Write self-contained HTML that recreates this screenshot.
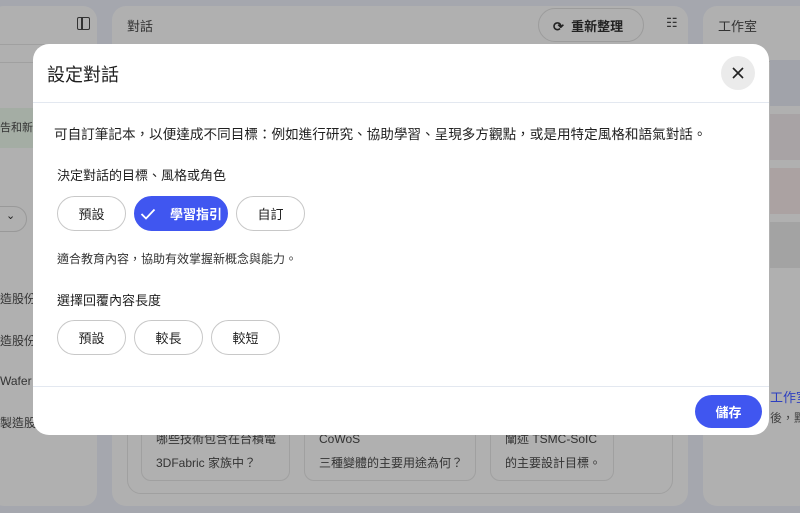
<!DOCTYPE html>
<html><head><meta charset="utf-8"><style>
*{box-sizing:border-box;margin:0;padding:0}
body{width:800px;height:513px;overflow:hidden;background:#a5a7ae;font-family:"Liberation Sans","Noto Sans CJK TC",sans-serif;position:relative;color:#1f1f1f}
.p{position:absolute;background:#b0b0b0;border-radius:14px}
.t{position:absolute;white-space:nowrap}
.dlg{position:absolute;left:33px;top:44px;width:736px;height:391px;background:#fff;border-radius:16px}
.chip{position:absolute;height:35px;border:1px solid #c8c8c8;border-radius:18px;font-size:13px;display:flex;align-items:center;justify-content:center;background:#fff;color:#1f1f1f}
.card{position:absolute;border:1px solid #a0a0a0;border-radius:10px;font-size:12px;color:#333;line-height:24px;padding-left:14px}
</style></head><body>
<div class="p" style="left:-10px;top:6px;width:107px;height:500px"></div>
<div class="p" style="left:112px;top:6px;width:576px;height:500px"></div>
<div class="p" style="left:703px;top:6px;width:110px;height:500px"></div>
<div style="position:absolute;left:0;top:44px;width:97px;height:1px;background:#a0a0a0"></div>
<div style="position:absolute;left:0;top:62px;width:97px;height:1px;background:#a0a0a0"></div>
<div style="position:absolute;left:0;top:108px;width:97px;height:40px;background:#a4ada4"></div>
<div class="t" style="left:0;top:119px;font-size:11px;color:#333">告和新</div>
<div style="position:absolute;left:-20px;top:206px;width:47px;height:26px;border:1px solid #999;border-radius:14px"></div>
<div class="t" style="left:6px;top:209px;font-size:11px">⌄</div>
<div class="t" style="left:0;top:290px;font-size:12px;color:#333">造股份有</div>
<div class="t" style="left:0;top:332px;font-size:12px;color:#333">造股份有</div>
<div class="t" style="left:0;top:374px;font-size:12px;color:#333">Wafer L</div>
<div class="t" style="left:0;top:414px;font-size:12px;color:#333">製造股</div>
<div style="position:absolute;left:77px;top:17px;width:13px;height:13px;border:1.5px solid #333;border-radius:2px"></div>
<div style="position:absolute;left:81px;top:17px;width:1.5px;height:13px;background:#333"></div>
<div class="t" style="left:127px;top:16px;font-size:13px;color:#333">對話</div>
<div style="position:absolute;left:538px;top:8px;width:106px;height:34px;border:1px solid #9c9c9c;border-radius:17px"></div>
<div class="t" style="left:553px;top:16px;font-size:13px;color:#222;font-weight:bold">⟳&nbsp;&nbsp;重新整理</div>
<div class="t" style="left:666px;top:15px;font-size:13px;color:#333">☷</div>
<div class="t" style="left:718px;top:16px;font-size:13px;color:#333">工作室</div>
<div style="position:absolute;left:703px;top:61px;width:97px;height:1px;background:#a0a0a0"></div>
<div style="position:absolute;left:770px;top:60px;width:30px;height:46px;background:#a1a3aa"></div>
<div style="position:absolute;left:770px;top:114px;width:30px;height:46px;background:#a8a3a5"></div>
<div style="position:absolute;left:770px;top:168px;width:30px;height:46px;background:#aba2a2"></div>
<div style="position:absolute;left:770px;top:222px;width:30px;height:46px;background:#a3a3a3"></div>
<div class="t" style="left:770px;top:387px;font-size:13px;color:#2d3fc0">工作室</div>
<div class="t" style="left:770px;top:409px;font-size:12px;color:#444">後，點</div>
<div style="position:absolute;left:127px;top:400px;width:546px;height:94px;border:1px solid #a0a0a0;border-radius:14px"></div>
<div class="card" style="left:141px;top:410px;width:149px;height:71px;padding-top:16px">哪些技術包含在台積電<br>3DFabric 家族中？</div>
<div class="card" style="left:304px;top:410px;width:172px;height:71px;padding-top:16px">CoWoS<br>三種變體的主要用途為何？</div>
<div class="card" style="left:490px;top:410px;width:124px;height:71px;padding-top:16px">闡述 TSMC-SoIC<br>的主要設計目標。</div>
<div class="dlg">
<div class="t" style="left:14px;top:17px;font-size:18px;color:#1f1f1f">設定對話</div>
<div style="position:absolute;left:688px;top:12px;width:34px;height:34px;border-radius:50%;background:#ebebeb"></div>
<svg style="position:absolute;left:698px;top:22px" width="14" height="14" viewBox="0 0 14 14"><path d="M2 2L12 12M12 2L2 12" stroke="#222" stroke-width="1.6"/></svg>
<div style="position:absolute;left:0;top:58px;width:736px;height:1px;background:#e3e8f0"></div>
<div class="t" style="left:21px;top:79px;font-size:13.6px;color:#1f1f1f">可自訂筆記本，以便達成不同目標：例如進行研究、協助學習、呈現多方觀點，或是用特定風格和語氣對話。</div>
<div class="t" style="left:24px;top:121px;font-size:13px">決定對話的目標、風格或角色</div>
<div class="chip" style="left:24px;top:152px;width:69px">預設</div>
<div class="chip" style="left:101px;top:152px;width:94px;background:#4056f0;border-color:#4056f0;color:#fff;font-weight:bold"><svg width="16" height="12" viewBox="0 0 16 12" style="margin-right:14px"><path d="M1.5 6L6 10.5L14.5 1.5" stroke="#fff" stroke-width="1.8" fill="none"/></svg>學習指引</div>
<div class="chip" style="left:203px;top:152px;width:69px">自訂</div>
<div class="t" style="left:24px;top:206px;font-size:12px;color:#333">適合教育內容，協助有效掌握新概念與能力。</div>
<div class="t" style="left:24px;top:246px;font-size:13px">選擇回覆內容長度</div>
<div class="chip" style="left:24px;top:276px;width:69px">預設</div>
<div class="chip" style="left:101px;top:276px;width:69px">較長</div>
<div class="chip" style="left:178px;top:276px;width:69px">較短</div>
<div style="position:absolute;left:0;top:342px;width:736px;height:1px;background:#e3e8f0"></div>
<div style="position:absolute;left:662px;top:351px;width:67px;height:33px;border-radius:17px;background:#4056f0;color:#fff;font-size:13px;font-weight:bold;display:flex;align-items:center;justify-content:center">儲存</div>
</div>
</body></html>
